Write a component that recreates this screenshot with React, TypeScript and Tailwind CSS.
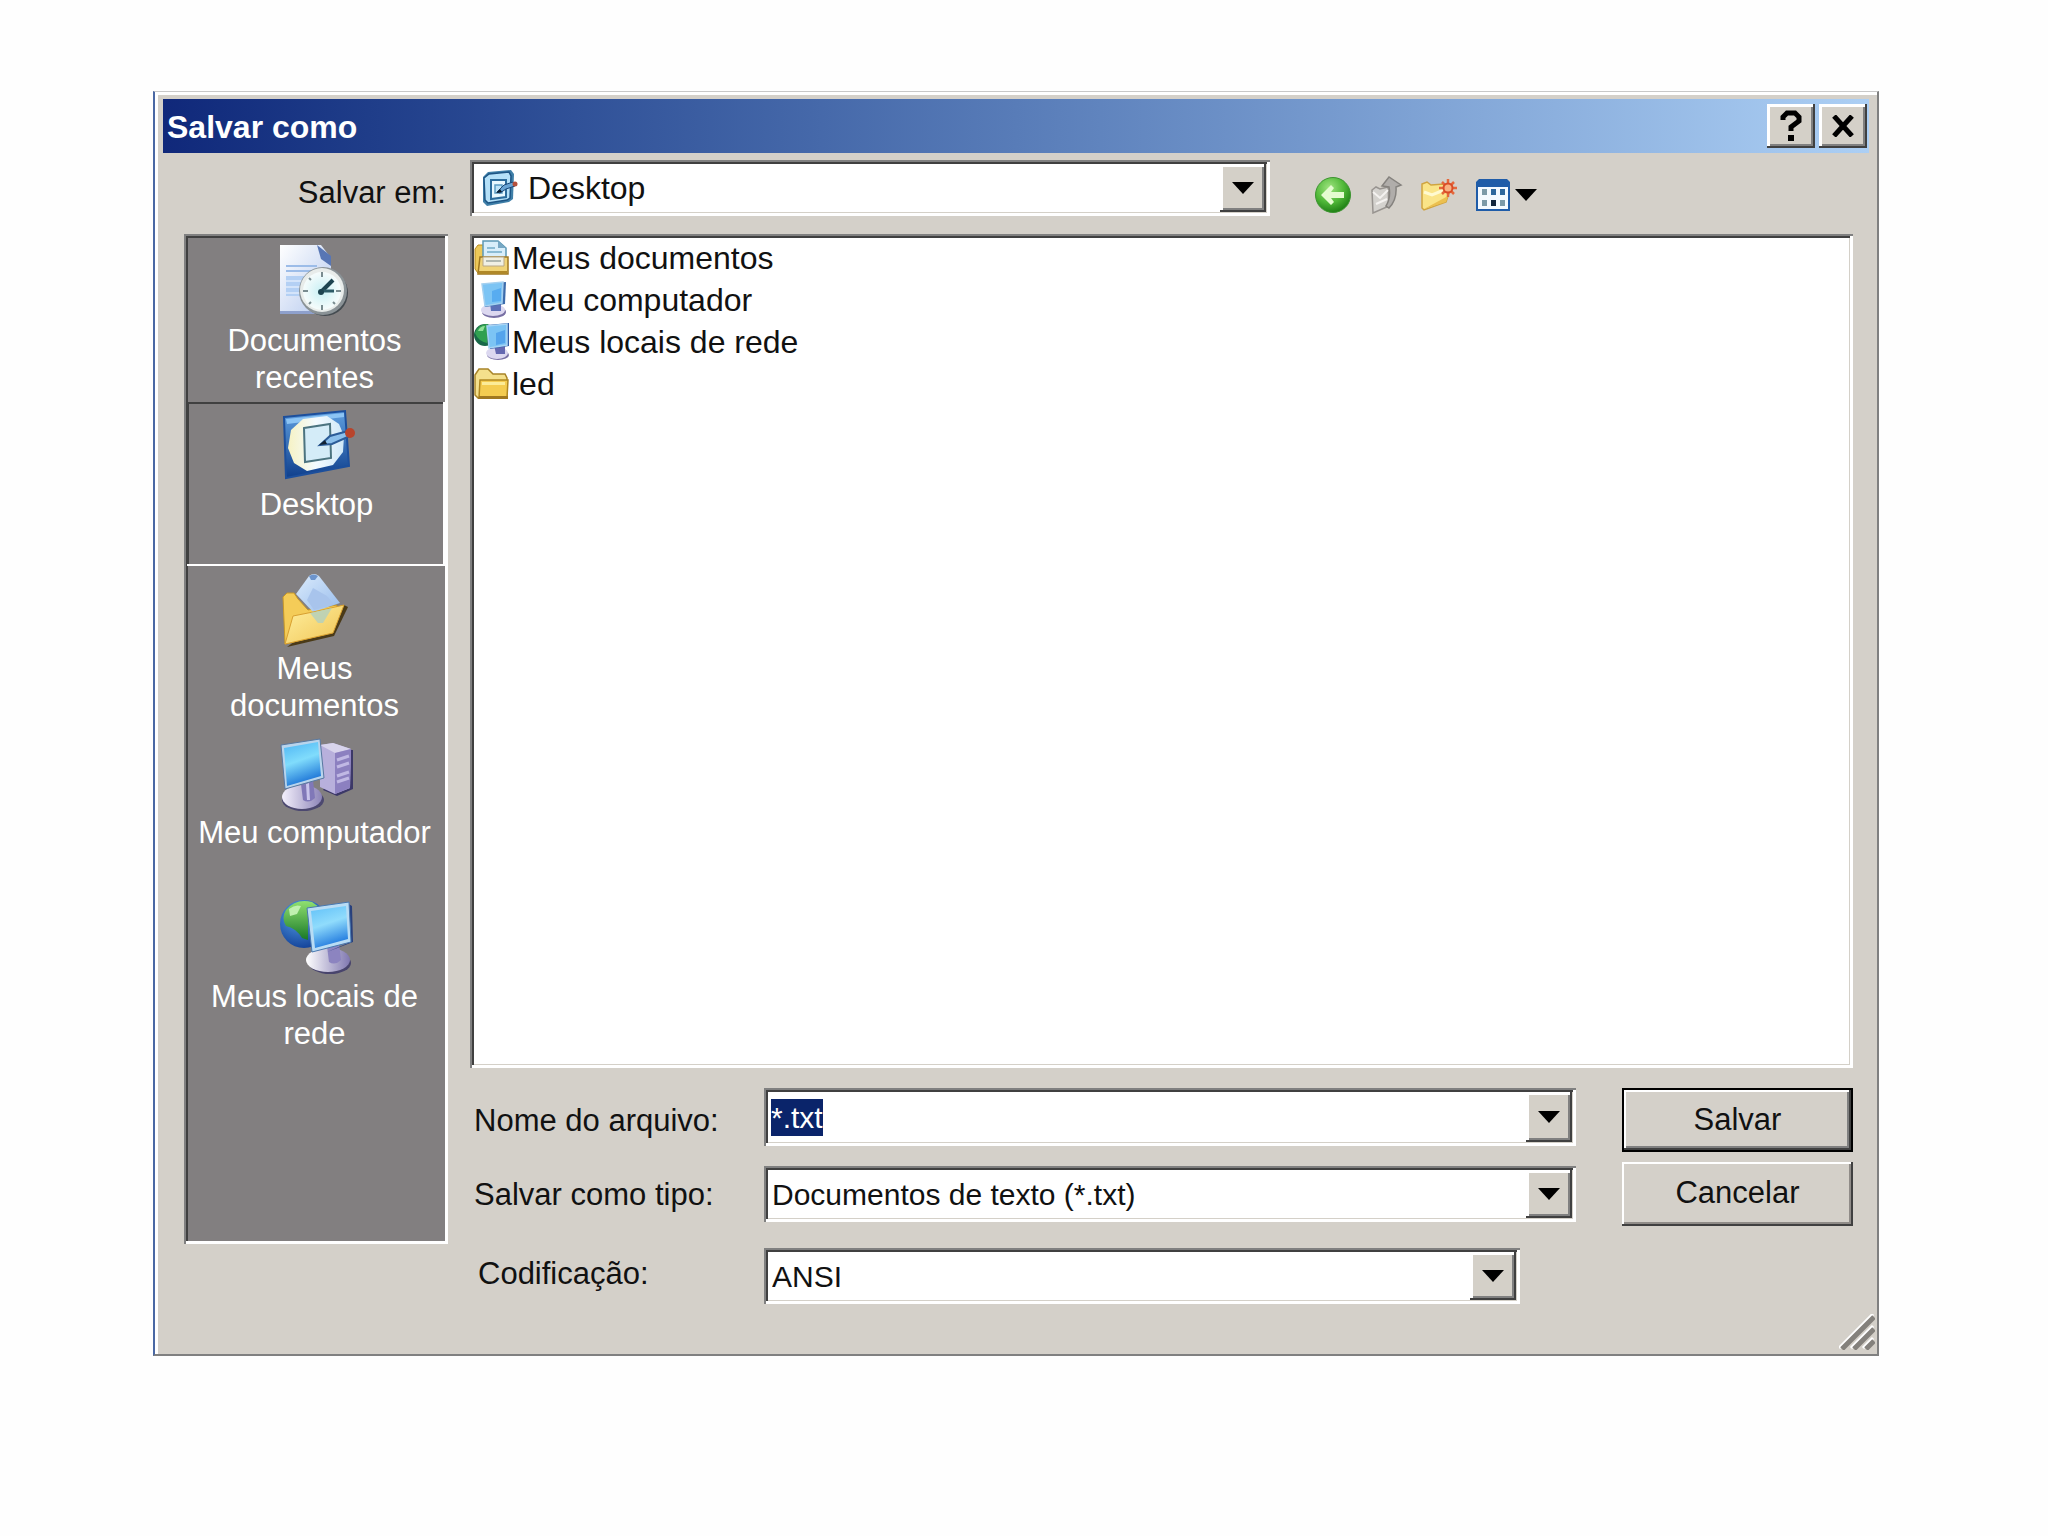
import { useEffect, useRef, type ReactNode } from "react";

const sunken =
  "bg-white p-1 shadow-[inset_2px_2px_0_#808080,inset_-3px_-3px_0_#fff,inset_4px_4px_0_#404040,inset_-4px_-4px_0_#d4d0c8]";
const raised =
  "bg-[#d4d0c8] shadow-[inset_-2px_-2px_0_#404040,inset_3px_3px_0_#fff,inset_-4px_-4px_0_#808080]";

function RecentIcon() {
  return (
    <svg width="76" height="72" viewBox="0 0 76 72" aria-hidden="true">
      <defs>
        <linearGradient id="rec-page" x1="0" y1="0" x2="1" y2="1">
          <stop offset="0" stopColor="#ffffff" />
          <stop offset="1" stopColor="#b4c8ee" />
        </linearGradient>
        <radialGradient id="rec-clock">
          <stop offset="0" stopColor="#c8f0f4" />
          <stop offset="1" stopColor="#f6fcfc" />
        </radialGradient>
      </defs>
      <path d="M3 1H44L54 14V70H3Z" fill="url(#rec-page)" />
      <path d="M3 67H54V70H3Z" fill="#8ea0cc" />
      <path d="M40 1L54 12V22L44 15Z" fill="#5876b4" />
      <path d="M9 22H40M9 27H34" stroke="#9cbce8" strokeWidth="2" />
      <path d="M9 32H28V52H9Z" fill="#b4d0f4" />
      <path d="M9 37H26M9 43H24M9 49H24" stroke="#d4e4fa" strokeWidth="2" />
      <circle cx="48" cy="49" r="23" fill="#444b50" />
      <circle cx="46" cy="47" r="24" fill="#8a9296" />
      <circle cx="45" cy="46" r="22" fill="#e8ecea" />
      <circle cx="45" cy="47" r="19" fill="url(#rec-clock)" />
      <path d="M45 28V33M45 61V66M26 47H31M59 47H64M32 34L34 36M56 58L58 60M32 60L34 58" stroke="#7a8c90" strokeWidth="2" />
      <path d="M44 48L56 36" stroke="#1d4450" strokeWidth="4" />
      <path d="M44 47H57" stroke="#2c5a66" strokeWidth="3" />
      <circle cx="44" cy="48" r="3" fill="#1d4450" />
    </svg>
  );
}

function DesktopIcon() {
  return (
    <svg width="76" height="76" viewBox="0 0 76 76" aria-hidden="true">
      <defs>
        <linearGradient id="desk-frame" x1="0" y1="0" x2="0" y2="1">
          <stop offset="0" stopColor="#5f9fe0" />
          <stop offset="1" stopColor="#0f3f8c" />
        </linearGradient>
        <linearGradient id="desk-pad" x1="0" y1="0" x2="1" y2="0">
          <stop offset="0" stopColor="#f6f2c4" />
          <stop offset="0.5" stopColor="#f4fbff" />
          <stop offset="1" stopColor="#cfe8f8" />
        </linearGradient>
      </defs>
      <path d="M5 9L66 3L70 58L7 70Z" fill="url(#desk-frame)" stroke="#1c4f9c" strokeWidth="2" />
      <path d="M7 11L65 5L65 9L8 16Z" fill="#8cc4f4" />
      <path d="M24 11L48 8L60 16L65 28L64 44L54 57L28 63L15 55L9 40L12 22Z" fill="url(#desk-pad)" />
      <path d="M25 20L51 16L52 50L26 54Z" fill="#d4ecf8" stroke="#4c7480" strokeWidth="2" />
      <path d="M41 37L51 28L69 23L71 28L53 36Z" fill="#8cc0ec" stroke="#2c5c98" strokeWidth="2" />
      <path d="M40 37L46 32L48 36Z" fill="#112233" />
      <circle cx="71" cy="25" r="5" fill="#b8442c" />
    </svg>
  );
}

function SmallDesktop() {
  return (
    <svg width="38" height="38" viewBox="0 0 38 38" aria-hidden="true">
      <path d="M3 8L8 3L31 1L34 5L33 30L29 33L7 37L3 33Z" fill="#3f7fa8" />
      <path d="M4 9L9 5L29 3L31 7L30 29L27 31L8 34L5 31Z" fill="#b4e0f8" stroke="#1c5484" strokeWidth="1.5" />
      <path d="M11 11H26V28L11 30Z" fill="#e8f8ff" stroke="#2c6c9c" strokeWidth="2" />
      <path d="M15 16H22V24H15Z" fill="#bfe4f8" stroke="#5c9cc4" strokeWidth="1.5" />
      <path d="M17 23L24 16L33 13L35 17L26 20L20 24Z" fill="#68a4d4" stroke="#1c4878" strokeWidth="1" />
      <path d="M16 24L20 20L22 23Z" fill="#0c1c2c" />
      <circle cx="35" cy="15" r="2.5" fill="#b4503c" />
    </svg>
  );
}

function DocumentsIcon() {
  return (
    <svg width="76" height="76" viewBox="0 0 76 76" aria-hidden="true">
      <defs>
        <linearGradient id="doc-front" x1="0" y1="0" x2="1" y2="1">
          <stop offset="0" stopColor="#fff0a0" />
          <stop offset="1" stopColor="#f0c454" />
        </linearGradient>
        <linearGradient id="doc-paper" x1="0" y1="0" x2="1" y2="1">
          <stop offset="0" stopColor="#dcecfc" />
          <stop offset="1" stopColor="#98bcec" />
        </linearGradient>
      </defs>
      <path d="M10 75L57 64L71 35L67 33Z" fill="#4a3a18" />
      <path d="M6 25L10 21H17L21 27L31 38L60 33L50 62L8 72Z" fill="#f4cc58" stroke="#c89828" strokeWidth="1" />
      <path d="M32 4Q37 0 42 4L63 31L36 40L19 22Z" fill="url(#doc-paper)" />
      <path d="M36 16L50 24L57 32L37 38L30 28Z" fill="#a8c4ec" />
      <path d="M32 4Q37 1 41 4L38 8H34Z" fill="#6c94cc" />
      <path d="M16 44L36 40L67 33L56 61L8 72Z" fill="url(#doc-front)" stroke="#d8a030" strokeWidth="1" />
      <path d="M33 41L55 36L46 51H41Z" fill="#b0d0c0" opacity="0.8" />
    </svg>
  );
}

function ComputerIcon() {
  return (
    <svg width="76" height="76" viewBox="0 0 76 76" aria-hidden="true">
      <defs>
        <linearGradient id="pc-screen" x1="0" y1="0" x2="0.3" y2="1">
          <stop offset="0" stopColor="#4cb4f4" />
          <stop offset="0.5" stopColor="#80dcfc" />
          <stop offset="1" stopColor="#2078d8" />
        </linearGradient>
        <linearGradient id="pc-base" x1="0" y1="0" x2="1" y2="0">
          <stop offset="0" stopColor="#f4f0fc" />
          <stop offset="1" stopColor="#8c84b8" />
        </linearGradient>
      </defs>
      <path d="M46 54L60 60L76 53V14H73Z" fill="#3c3868" />
      <path d="M43 9L56 7L74 13L73 52L58 58L43 51Z" fill="#b8b0dc" />
      <path d="M43 9L56 7L74 13L58 17Z" fill="#d8d4ec" />
      <path d="M58 17L74 13L73 52L58 58Z" fill="#8c80c0" />
      <path d="M60 24L72 20M60 31L72 27M60 40L72 36M60 46L72 42" stroke="#c0b8e4" strokeWidth="3" />
      <ellipse cx="26" cy="64" rx="21" ry="11" fill="#4c4870" />
      <ellipse cx="25" cy="61" rx="20" ry="12" fill="url(#pc-base)" />
      <path d="M24 48L36 44L38 62Q32 68 26 64Z" fill="#8078b8" />
      <path d="M29 48L32 47L33 64H30Z" fill="#c8c4ec" />
      <path d="M4 9L43 3L47 42L8 53Z" fill="#b8d4ec" stroke="#5878a0" strokeWidth="1" />
      <path d="M7 12L41 6L44 40L10 50Z" fill="url(#pc-screen)" />
    </svg>
  );
}

function NetworkIcon() {
  return (
    <svg width="76" height="78" viewBox="0 0 76 78" aria-hidden="true">
      <defs>
        <radialGradient id="net-globe" cx="0.4" cy="0.3" r="0.8">
          <stop offset="0" stopColor="#58a4ec" />
          <stop offset="1" stopColor="#0c3890" />
        </radialGradient>
        <linearGradient id="net-land" x1="0" y1="0" x2="0" y2="1">
          <stop offset="0" stopColor="#90e070" />
          <stop offset="1" stopColor="#187828" />
        </linearGradient>
        <linearGradient id="net-screen" x1="0" y1="0" x2="0.3" y2="1">
          <stop offset="0" stopColor="#60c0f8" />
          <stop offset="0.5" stopColor="#90dcfc" />
          <stop offset="1" stopColor="#2880e0" />
        </linearGradient>
        <linearGradient id="net-base" x1="0" y1="0" x2="1" y2="0">
          <stop offset="0" stopColor="#ffffff" />
          <stop offset="1" stopColor="#8078b0" />
        </linearGradient>
      </defs>
      <circle cx="27" cy="24" r="24" fill="url(#net-globe)" />
      <path d="M9 10Q19 -2 35 2L42 7L31 12V40L25 38Q19 28 9 26Q4 18 9 10Z" fill="url(#net-land)" />
      <path d="M12 9Q18 4 24 6L20 14L13 16Z" fill="#c0f0b0" />
      <ellipse cx="53" cy="63" rx="21" ry="11" fill="#48446c" />
      <ellipse cx="51" cy="60" rx="22" ry="12" fill="url(#net-base)" />
      <path d="M50 46L62 43L64 60Q58 66 52 62Z" fill="#8c84c0" />
      <path d="M70 3L75 6L76 42L50 52L71 43Z" fill="#28407c" />
      <path d="M30 8L72 2L74 42L35 52Z" fill="#b8dcf4" stroke="#4878b0" strokeWidth="1" />
      <path d="M34 11L69 6L71 39L38 48Z" fill="url(#net-screen)" />
    </svg>
  );
}

function SmallDocuments() {
  return (
    <svg width="36" height="36" viewBox="0 0 36 36" aria-hidden="true">
      <path d="M1 9L4 5H10V33H4L1 29Z" fill="#ecc858" stroke="#b88c20" />
      <path d="M9 1H24L32 8V22H9Z" fill="#d8eefa" stroke="#5c98b4" strokeWidth="1.5" />
      <path d="M24 1V8H32Z" fill="#78a8c4" />
      <path d="M13 8H21M13 12H28" stroke="#8cbcd4" strokeWidth="2" />
      <path d="M6 17H34V34H4Z" fill="#f0d478" stroke="#a07820" strokeWidth="1.5" />
      <path d="M9 17H30V26H9Z" fill="#f0f0e4" stroke="#b8a888" />
      <path d="M12 21H27" stroke="#b0b8b0" strokeWidth="2" />
      <path d="M5 31H33V34H4Z" fill="#b08828" />
    </svg>
  );
}

function SmallComputer() {
  return (
    <svg width="36" height="38" viewBox="0 0 36 38" aria-hidden="true">
      <ellipse cx="20" cy="31" rx="12" ry="6" fill="#7870a4" />
      <ellipse cx="19" cy="29" rx="12" ry="6" fill="#dcd8f0" />
      <path d="M16 22H27V30H17Z" fill="#5c70b8" />
      <path d="M8 3L32 1L31 23L11 26Z" fill="#3c6cac" />
      <path d="M8 3L29 1L28 22L11 25Z" fill="#7cc4f4" stroke="#a4d0f0" strokeWidth="1.5" />
      <path d="M18 10L27 7V20L18 21Z" fill="#58acf0" />
    </svg>
  );
}

function SmallNetwork() {
  return (
    <svg width="36" height="38" viewBox="0 0 36 38" aria-hidden="true">
      <circle cx="11" cy="12" r="11" fill="#186848" />
      <path d="M1 10Q4 1 14 1L13 20Q4 18 1 10Z" fill="#30a050" />
      <path d="M4 8Q6 3 11 3L9 8Z" fill="#90e098" />
      <ellipse cx="24" cy="32" rx="11" ry="5" fill="#7870a4" />
      <ellipse cx="23" cy="30" rx="11" ry="6" fill="#dcd8f0" />
      <path d="M20 22H31V31H22Z" fill="#6468b0" />
      <path d="M13 2L35 0V23L16 26Z" fill="#305ca4" />
      <path d="M13 3L33 1V22L15 25Z" fill="#7cc4f4" stroke="#a8d4f4" strokeWidth="1.5" />
      <path d="M22 10L31 7V20L22 22Z" fill="#54a4ec" />
    </svg>
  );
}

function SmallFolder() {
  return (
    <svg width="36" height="36" viewBox="0 0 36 36" aria-hidden="true">
      <path d="M1 9L5 3H14L19 8H31L33 12V32H4L1 29Z" fill="#f4e08c" stroke="#a88428" strokeWidth="1.5" />
      <path d="M6 14H34L33 32H5Z" fill="#f4cc50" stroke="#b08820" strokeWidth="1.5" />
      <path d="M8 16H31V19H8Z" fill="#fcec98" />
      <path d="M5 30H34V33H4Z" fill="#a07820" />
    </svg>
  );
}

function BackIcon() {
  return (
    <svg width="38" height="38" viewBox="0 0 38 38" aria-hidden="true">
      <defs>
        <radialGradient id="back-ball" cx="0.4" cy="0.3" r="0.75">
          <stop offset="0" stopColor="#a0e480" />
          <stop offset="0.55" stopColor="#50b838" />
          <stop offset="1" stopColor="#187810" />
        </radialGradient>
      </defs>
      <circle cx="19" cy="19" r="17.5" fill="url(#back-ball)" stroke="#3c9430" />
      <path d="M7 19L17 9L20 12L17 16H30V22H17L20 26L17 29Z" fill="#e4fcd0" />
    </svg>
  );
}

function UpIcon() {
  return (
    <svg width="34" height="38" viewBox="0 0 34 38" aria-hidden="true">
      <path d="M3 14L7 11L11 13L19 11L20 30L4 37Z" fill="#d4d2ce" stroke="#989490" strokeWidth="1.5" />
      <path d="M4 16L11 22L19 14M7 28L18 23" stroke="#f4f2f0" strokeWidth="2" fill="none" />
      <path d="M13 10L20 1L32 9L27 11Q28 24 20 32L17 30Q22 22 20 11Z" fill="#b0adaa" stroke="#85827e" strokeWidth="1.5" />
    </svg>
  );
}

function NewFolderIcon() {
  return (
    <svg width="38" height="34" viewBox="0 0 38 34" aria-hidden="true">
      <path d="M2 6L7 4L11 7L24 6L29 15L26 24L4 32L2 30Z" fill="#fae488" stroke="#d0a440" strokeWidth="1.5" />
      <path d="M4 14L12 17L24 12" stroke="#fffad0" strokeWidth="3" fill="none" />
      <path d="M4 31L26 24L28 18Z" fill="#ecc050" />
      <path d="M28 1V19M19 10H37M22 4L34 16M34 4L22 16" stroke="#e4683c" strokeWidth="2.5" />
      <circle cx="28" cy="10" r="4.5" fill="#f8b080" stroke="#d84c28" strokeWidth="2" />
    </svg>
  );
}

function ViewsIcon() {
  return (
    <svg width="36" height="34" viewBox="0 0 36 34" aria-hidden="true">
      <path d="M1 4L4 1H32L35 4V33H1Z" fill="#1f5ca8" />
      <path d="M3 9H33V31H3Z" fill="#f4faff" />
      <path d="M7 11H12V17H7ZM7 22H12V28H7ZM25 22H30V28H25Z" fill="#7c9aa8" />
      <path d="M16 11H21V17H16ZM25 11H30V17H25Z" fill="#2f689c" />
      <path d="M16 22H21V28H16Z" fill="#10243c" />
    </svg>
  );
}

function Triangle() {
  return (
    <svg width="22" height="12" viewBox="0 0 22 12" aria-hidden="true">
      <path d="M0 0H22L11 12Z" fill="#000" />
    </svg>
  );
}

const arrowBox = "flex w-[46px] shrink-0 items-center justify-center self-stretch " + raised;

function Combo({ id, value, icon, className }: { id: string; value: string; icon?: ReactNode; className: string }) {
  return (
    <div className={"flex h-14 items-center " + sunken + " " + className}>
      {icon}
      <select id={id} className="h-full min-w-0 flex-1 appearance-none bg-white pl-1 outline-none">
        <option>{value}</option>
      </select>
      <span className={arrowBox}>
        <Triangle />
      </span>
    </div>
  );
}

const places = [
  { label: "Documentos recentes", icon: <RecentIcon /> },
  { label: "Desktop", icon: <DesktopIcon />, active: true },
  { label: "Meus documentos", icon: <DocumentsIcon /> },
  { label: "Meu computador", icon: <ComputerIcon /> },
  { label: "Meus locais de rede", icon: <NetworkIcon /> },
];

const files = [
  { label: "Meus documentos", icon: <SmallDocuments /> },
  { label: "Meu computador", icon: <SmallComputer /> },
  { label: "Meus locais de rede", icon: <SmallNetwork /> },
  { label: "led", icon: <SmallFolder /> },
];

export default function App() {
  const nameRef = useRef<HTMLInputElement>(null);

  useEffect(() => {
    nameRef.current?.focus();
    nameRef.current?.select();
  }, []);

  return (
    <main className="min-h-screen bg-[#fefefe] pt-[91px] pr-[169px] pl-[153px] font-['Liberation_Sans',Arial,sans-serif] text-[31px] leading-[37px] text-[#111]">
      <section
        aria-label="Salvar como"
        className="relative border-t border-r-2 border-b-2 border-l-2 border-t-[#c8c8c8] border-r-[#808080] border-b-[#808080] border-l-[#4a68a4] bg-[#d4d0c9] pb-[50px] shadow-[inset_3px_3px_0_#fff]"
      >
        <div className="px-2 pt-[7px]">
          <header className="flex h-[54px] items-center gap-1 bg-linear-to-r from-[#10287a] via-[#587cb8] to-[#accff4] pr-0.5 pl-1">
            <h1 className="flex-1 pt-0.5 text-[32px] font-bold text-white">Salvar como</h1>
            <button aria-label="Ajuda" className={"flex h-11 w-12 items-center justify-center " + raised}>
              <svg width="24" height="32" viewBox="0 0 24 32" aria-hidden="true">
                <path d="M4 10V7L8 3H16L20 7V11L12 17V21" fill="none" stroke="#000" strokeWidth="5" />
                <path d="M9 25H15V31H9Z" fill="#000" />
              </svg>
            </button>
            <button aria-label="Fechar" className={"flex h-11 w-12 items-center justify-center " + raised}>
              <svg width="22" height="22" viewBox="0 0 22 22" aria-hidden="true">
                <path d="M2 1L20 21M20 1L2 21" stroke="#000" strokeWidth="5" />
              </svg>
            </button>
          </header>
        </div>

        <div className="flex items-start pt-[7px] pl-[29px]">
          <label htmlFor="folder" className="w-[262px] pt-3.5 text-right">
            Salvar em:
          </label>
          <Combo
            id="folder"
            value="Desktop"
            icon={
              <span className="px-1.5">
                <SmallDesktop />
              </span>
            }
            className="ml-6 w-[800px] text-[32px]"
          />
          <div className="ml-11 flex items-center gap-[17px] pt-4">
            <button aria-label="Voltar"><BackIcon /></button>
            <button aria-label="Um nível acima"><UpIcon /></button>
            <button aria-label="Nova pasta"><NewFolderIcon /></button>
            <button aria-label="Modos de exibição" className="flex items-center gap-1">
              <ViewsIcon />
              <Triangle />
            </button>
          </div>
        </div>

        <div className="flex items-start gap-[22px] pt-[18px] pr-6 pl-[29px]">
          <nav
            aria-label="Locais"
            className="min-h-[1010px] w-[264px] shrink-0 bg-[#827f80] py-1 pr-0.5 pl-[3px] shadow-[inset_2px_2px_0_#808080,inset_-3px_-3px_0_#fff,inset_4px_4px_0_#404040]"
          >
            {places.map((place) => (
              <button
                key={place.label}
                className={
                  "flex h-[164px] w-full flex-col items-center gap-1.5 px-4 pt-1.5 text-white " +
                  (place.active ? "shadow-[inset_-3px_-2px_0_#fff,inset_2px_2px_0_#404040]" : "pr-5")
                }
              >
                <span className="flex h-[72px] items-start">{place.icon}</span>
                <span className={place.label === "Meu computador" ? "whitespace-nowrap" : ""}>{place.label}</span>
              </button>
            ))}
          </nav>

          <div className="min-w-0 flex-1">
            <ul className={"min-h-[834px] text-[32px] " + sunken}>
              {files.map((file) => (
                <li key={file.label} className="flex h-[42px] items-center gap-0.5 pb-0.5">
                  {file.icon}
                  {file.label}
                </li>
              ))}
            </ul>

            <form className="flex items-start justify-between pt-5" onSubmit={(e) => e.preventDefault()}>
              <div className="grid w-[1106px] grid-cols-[290px_1fr] items-center gap-x-1 gap-y-5">
                <label htmlFor="name" className="pt-1.5 pl-1">Nome do arquivo:</label>
                <div className={"flex h-[58px] items-center " + sunken}>
                  <input
                    id="name"
                    ref={nameRef}
                    defaultValue="*.txt"
                    className="min-w-0 flex-1 bg-white pl-[3px] text-[30px] outline-none selection:bg-[#0a246a] selection:text-white"
                  />
                  <button type="button" aria-label="Nomes recentes" className={arrowBox}>
                    <Triangle />
                  </button>
                </div>
                <label htmlFor="type" className="pl-1">Salvar como tipo:</label>
                <Combo id="type" value="Documentos de texto (*.txt)" className="text-[30px]" />
                <label htmlFor="encoding" className="pl-2">Codificação:</label>
                <Combo id="encoding" value="ANSI" className="mt-1.5 mr-14 text-[30px]" />
              </div>
              <div className="flex w-[231px] flex-col gap-2.5">
                <button
                  type="submit"
                  className="h-16 border-2 border-black bg-[#d4d0c9] pb-0.5 shadow-[inset_-2px_-2px_0_#404040,inset_2px_2px_0_#fff,inset_-4px_-4px_0_#808080]"
                >
                  Salvar
                </button>
                <button
                  type="button"
                  className="h-16 bg-[#d4d0c9] pb-1 shadow-[inset_-2px_-2px_0_#404040,inset_2px_2px_0_#fff,inset_-4px_-4px_0_#908c88]"
                >
                  Cancelar
                </button>
              </div>
            </form>
          </div>
        </div>

        <svg width="36" height="36" viewBox="0 0 36 36" aria-hidden="true" className="absolute right-0.5 bottom-1">
          <path d="M0 34L34 0M12 34L34 12M24 34L34 24" stroke="#fff" strokeWidth="3" />
          <path d="M3 35L35 3M15 35L35 15M27 35L35 27" stroke="#84817c" strokeWidth="5" />
        </svg>
      </section>
    </main>
  );
}
